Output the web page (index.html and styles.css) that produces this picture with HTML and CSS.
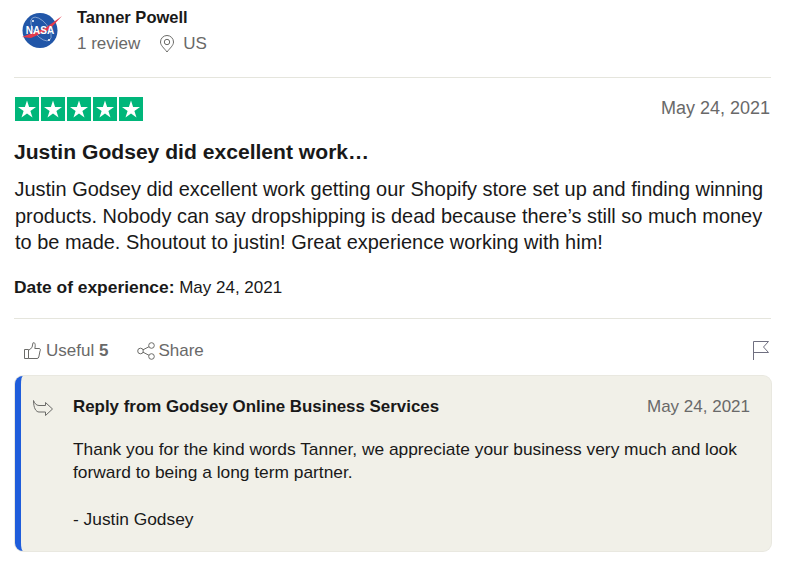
FILE: index.html
```html
<!DOCTYPE html>
<html lang="en">
<head>
<meta charset="utf-8">
<title>Review</title>
<link rel="stylesheet" href="styles.css">
</head>
<body>
<article class="review">
  <header class="consumer">
    <svg class="avatar" viewBox="0 0 44 40" width="44" height="40" aria-hidden="true">
      <circle cx="21" cy="21.500" r="17.500" fill="#2156a8"/>
      <g fill="none" stroke="#b4c8e4" stroke-width=".6"><ellipse cx="22" cy="20" rx="7" ry="14" transform="rotate(-38 22 20)"/></g>
      <circle cx="14" cy="12" r="1" fill="#fff"/>
      <circle cx="30" cy="31" r="1" fill="#fff"/>
      <path d="M3 28 L27 18.500 L43 7 L30 21 L12 29 Z" fill="#e23b4c"/>
      <text x="21" y="25" class="nasa">NASA</text>
    </svg>
    <div class="consumer-info">
      <div class="name">Tanner Powell</div>
      <div class="meta">
        <span>1 review</span>
        <span class="location">
          <svg class="pin" viewBox="0 0 16 18" width="16" height="18" aria-hidden="true"><path d="M8 17 C5 13 1.500 10.500 1.500 7 A6.500 6.500 0 0 1 14.500 7 C14.500 10.500 11 13 8 17 Z" fill="none" stroke="#6b6b68" stroke-width="1"/><circle cx="8" cy="7" r="2.700" fill="none" stroke="#6b6b68" stroke-width="1"/></svg>
          US
        </span>
      </div>
    </div>
  </header>

  <section class="content">
    <div class="rating-row">
      <div class="stars" aria-label="5 stars">
        <span class="star"><svg viewBox="0 0 24 24"><use href="#s"/></svg></span>
        <span class="star"><svg viewBox="0 0 24 24"><use href="#s"/></svg></span>
        <span class="star"><svg viewBox="0 0 24 24"><use href="#s"/></svg></span>
        <span class="star"><svg viewBox="0 0 24 24"><use href="#s"/></svg></span>
        <span class="star"><svg viewBox="0 0 24 24"><use href="#s"/></svg></span>
      </div>
      <time class="date">May 24, 2021</time>
    </div>
    <h2 class="title">Justin Godsey did excellent work…</h2>
    <p class="body">Justin Godsey did excellent work getting our Shopify store set up and finding winning products. Nobody can say dropshipping is dead because there’s still so much money to be made. Shoutout to justin! Great experience working with him!</p>
    <p class="experience"><b>Date of experience:</b> May 24, 2021</p>
  </section>

  <footer class="actions">
    <div class="action-group">
      <span class="action">
        <svg viewBox="0 0 17 17" width="17" height="17" aria-hidden="true"><path d="M.5 7.500H4.500V16.500H.5Z M4.500 8.500 L8 5.500 L9 .8 C11 .3 11.800 2 10.800 6.500 H15 C16.500 6.500 16.800 8 16 9 L14.800 15 C14.500 16 14 16.500 13 16.500 H4.500" fill="none" stroke="#6b6b68" stroke-width="1"/></svg>
        <span>Useful <b>5</b></span>
      </span>
      <span class="action action-share">
        <svg viewBox="0 0 18 18" width="18" height="18" aria-hidden="true"><g fill="none" stroke="#6b6b68" stroke-width="1"><circle cx="3.500" cy="9" r="2.800"/><circle cx="14.500" cy="3.500" r="2.800"/><circle cx="14.500" cy="14.500" r="2.800"/><path d="M6 7.800 L12 4.700 M6 10.200 L12 13.300"/></g></svg>
        <span>Share</span>
      </span>
    </div>
    <svg class="flag" viewBox="0 0 17 19" width="17" height="19" aria-hidden="true"><path d="M.5 19V.5H15.500L10.500 6L15.500 11.500H.5" fill="none" stroke="#6f6f80" stroke-width="1"/></svg>
  </footer>

  <aside class="reply">
    <svg class="reply-icon" viewBox="0 0 20 17" width="20" height="17" aria-hidden="true"><path d="M.5 .5 C1.500 3 3 5.500 6 5.500 H12.500 V2.500 L19.500 9 L12.500 15.500 V12 H6 C3 12 .5 8 .5 .5 Z" fill="none" stroke="#6b6b68" stroke-width="1"/></svg>
    <div class="reply-main">
      <div class="reply-head">
        <strong class="reply-title">Reply from Godsey Online Business Services</strong>
        <time class="reply-date">May 24, 2021</time>
      </div>
      <p class="reply-text">Thank you for the kind words Tanner, we appreciate your business very much and look forward to being a long term partner.<br><br>- Justin Godsey</p>
    </div>
  </aside>
</article>
<svg class="defs" width="0" height="0" aria-hidden="true"><defs><path id="s" fill="#fff" d="M12 3.500 L14.100 10 H21 L15.400 14 L17.500 20.500 L12 16.500 L6.500 20.500 L8.600 14 L3 10 H9.900 Z"/></defs></svg>
</body>
</html>
```
FILE: styles.css
```css
* { box-sizing: border-box; }
html, body { margin: 0; padding: 0; background: #fff; }
body {
  font-family: "Liberation Sans", Arial, sans-serif;
  color: #191919;
  overflow: hidden;
}
.defs { position: absolute; }
.review { width: 771px; padding-left: 14px; height: 561px; }
.consumer {
  display: flex;
  height: 78px;
  border-bottom: 1px solid #e5e5dd;
}
.avatar { margin: 9px 0 0 5px; flex: none; }
.nasa { font-size: 10px; font-weight: 700; fill: #fff; text-anchor: middle; }
.consumer-info { margin-left: 14px; padding-top: 8px; }
.name { font-size: 16.500px; font-weight: 700; line-height: 19px; }
.meta {
  display: flex;
  gap: 19px;
  margin-top: 5px;
  font-size: 17px;
  line-height: 24px;
  color: #696969;
}
.location { display: inline-flex; align-items: center; gap: 8px; }
.content { padding-top: 19px; height: 241px; border-bottom: 1px solid #e5e5dd; }
.rating-row { display: flex; justify-content: space-between; height: 24px; }
.stars { display: flex; gap: 2px; margin-left: 1px; }
.star { width: 24px; height: 24px; background: #00b67a; display: block; }
.star svg { display: block; width: 24px; height: 24px; }
.date { font-size: 18px; line-height: 22px; color: #696969; padding-right: 1px; }
.title { margin: 18px 0 0; font-size: 21.100px; line-height: 26px; font-weight: 700; }
.body { margin: 11px 0 0; font-size: 19.970px; line-height: 26.500px; padding-left: 1px; text-indent: -0.500px; }
.experience { margin: 19px 0 0; font-size: 17px; line-height: 24px; }
.experience b { font-size: 17.400px; }
.actions {
  display: flex;
  justify-content: space-between;
  align-items: center;
  height: 57px;
  padding-top: 6px;
}
.action-group { display: flex; gap: 29px; margin-left: 10px; }
.action { display: inline-flex; align-items: center; gap: 5px; font-size: 17px; color: #696969; }
.action-share { gap: 3px; }
.flag { margin: 0 1px 1px 0; }
.reply {
  display: flex;
  height: 175px;
  background: #f1f0e8;
  border-left: 6px solid #1f5ddb;
  border-radius: 8px;
  box-shadow: 0 0 0 1px #e9e8e0;
  margin-left: 1px;
}
.reply-icon { margin: 24px 0 0 12px; flex: none; }
.reply-main { flex: 1; padding: 19px 21px 0 20px; }
.reply-head { display: flex; justify-content: space-between; font-size: 17px; line-height: 24px; }
.reply-title { font-size: 16.900px; }
.reply-date { color: #696969; }
.reply-text { margin: 19px 0 0; font-size: 17.350px; line-height: 23.300px; }
```
